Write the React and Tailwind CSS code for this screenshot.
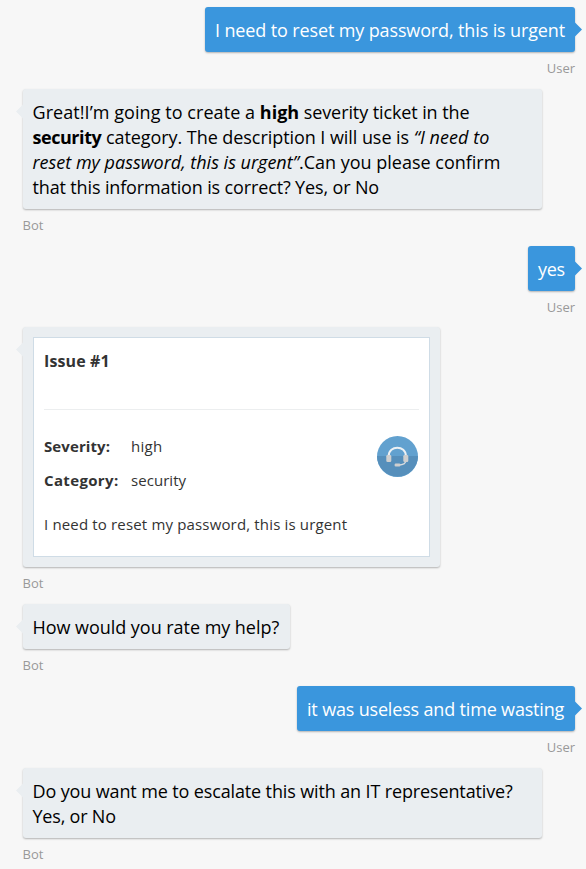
function Line({ className = "", children }) {
  return <span className={`block w-max whitespace-nowrap ${className}`}>{children}</span>;
}

function Message({ from, width, children }) {
  const user = from === "User";
  return (
    <div className={`mb-[5px] flex flex-col ${user ? "items-end" : "items-start"}`}>
      <div
        className={`relative rounded-[3px] px-[10px] pt-[11px] pb-[9px] text-[18px] leading-[25px] shadow-[0_1px_2px_rgba(0,0,0,0.28)] ${width} ${
          user ? "bg-[#3a96dd] text-white" : "bg-[#eaeef1] text-black"
        }`}
      >
        <svg
          viewBox="0 0 7 15"
          className={`absolute top-[15px] h-[15px] w-[7px] ${
            user ? "-right-[7px] text-[#3a96dd]" : "-left-[7px] text-[#eaeef1]"
          }`}
        >
          <path d={user ? "M0 0.5L7 7.5L0 14.5Z" : "M7 0.5L0 7.5L7 14.5Z"} fill="currentColor" />
        </svg>
        {children}
      </div>
      <div className="h-8 pt-[7px] text-[13px] leading-[18px] text-[#999]">{from}</div>
    </div>
  );
}

function HeadsetIcon() {
  return (
    <svg viewBox="0 0 41 41" className="h-[41px] w-[41px]">
      <circle cx="20.5" cy="20.5" r="20.5" fill="#62a1cf" />
      <path d="M0 20A20.5 20.5 0 0 0 41 20Z" fill="#568fbb" />
      <path d="M11.7 21V20C11.7 8.9 28.9 8.9 28.9 20V21" fill="none" stroke="#edf1f4" strokeWidth="2" />
      <path d="M29 24C29 27.5 27 29 21.5 29" fill="none" stroke="#d9dcdf" strokeWidth="1.4" />
      <rect x="9.3" y="19" width="5" height="7" rx="1.3" fill="#cfcfcf" />
      <rect x="26.3" y="19" width="5" height="7" rx="1.3" fill="#cfcfcf" />
      <rect x="17.6" y="27.6" width="5.8" height="3" rx="1.1" fill="#cfcfcf" />
    </svg>
  );
}

function IssueCard() {
  return (
    <div className="-mt-px h-[220px] w-[397px] border border-[#cfdce6] bg-white px-[10px] text-[15px] text-[#333]">
      <div className="h-[72px] border-b border-[#eceeef] pt-[11px] text-[16px] leading-6 font-bold">
        <Line className="tracking-[0.12px]">Issue #1</Line>
      </div>
      <div className="flex justify-between pt-[19px]">
        <div className="grid grid-cols-[87px_auto] leading-[34px]">
          <Line className="font-bold tracking-[0.1px]">Severity:</Line>
          <Line className="tracking-[0.3px]">high</Line>
          <Line className="font-bold tracking-[0.35px]">Category:</Line>
          <Line className="tracking-[0.05px]">security</Line>
        </div>
        <div className="mt-[7px] mr-px">
          <HeadsetIcon />
        </div>
      </div>
      <Line className="pt-[15px] leading-6 tracking-[0.16px]">I need to reset my password, this is urgent</Line>
    </div>
  );
}

export default function App() {
  return (
    <main className="h-[869px] w-[586px] overflow-hidden bg-[#f7f7f7] pt-[7px] pr-[11px] pl-[22.5px] font-['Open_Sans','Noto_Sans',sans-serif]">
      <Message from="User" width="w-[370px]">
        <Line className="tracking-[-0.13px]">I need to reset my password, this is urgent</Line>
      </Message>
      <Message from="Bot" width="w-[519px] h-[120px]">
        <Line>
          <span className="tracking-[0.06px]">Great!I’m going to create a </span>
          <b>high</b>
          <span className="tracking-[-0.1px]"> severity ticket in the</span>
        </Line>
        <Line>
          <b className="tracking-[-0.45px]">security</b>
          <span className="tracking-[-0.06px]"> category. The description I will use is </span>
          <i className="tracking-[0.05px]">“I need to</i>
        </Line>
        <Line>
          <i>reset my password, this is urgent”</i>.Can you please confirm
        </Line>
        <Line className="tracking-[-0.14px]">that this information is correct? Yes, or No</Line>
      </Message>
      <Message from="User" width="w-[47px]">
        <Line className="tracking-[-0.3px]">yes</Line>
      </Message>
      <div className="-mt-px">
        <Message from="Bot" width="w-[417.5px] h-[240px]">
          <div className="pl-[0.5px]">
            <IssueCard />
          </div>
        </Message>
      </div>
      <Message from="Bot" width="w-[267px]">
        <Line className="tracking-[-0.04px]">How would you rate my help?</Line>
      </Message>
      <Message from="User" width="w-[278px]">
        <Line className="tracking-[-0.17px]">it was useless and time wasting</Line>
      </Message>
      <Message from="Bot" width="w-[519px]">
        <Line className="tracking-[-0.13px]">Do you want me to escalate this with an IT representative?</Line>
        <Line className="tracking-[-0.2px]">Yes, or No</Line>
      </Message>
    </main>
  );
}
